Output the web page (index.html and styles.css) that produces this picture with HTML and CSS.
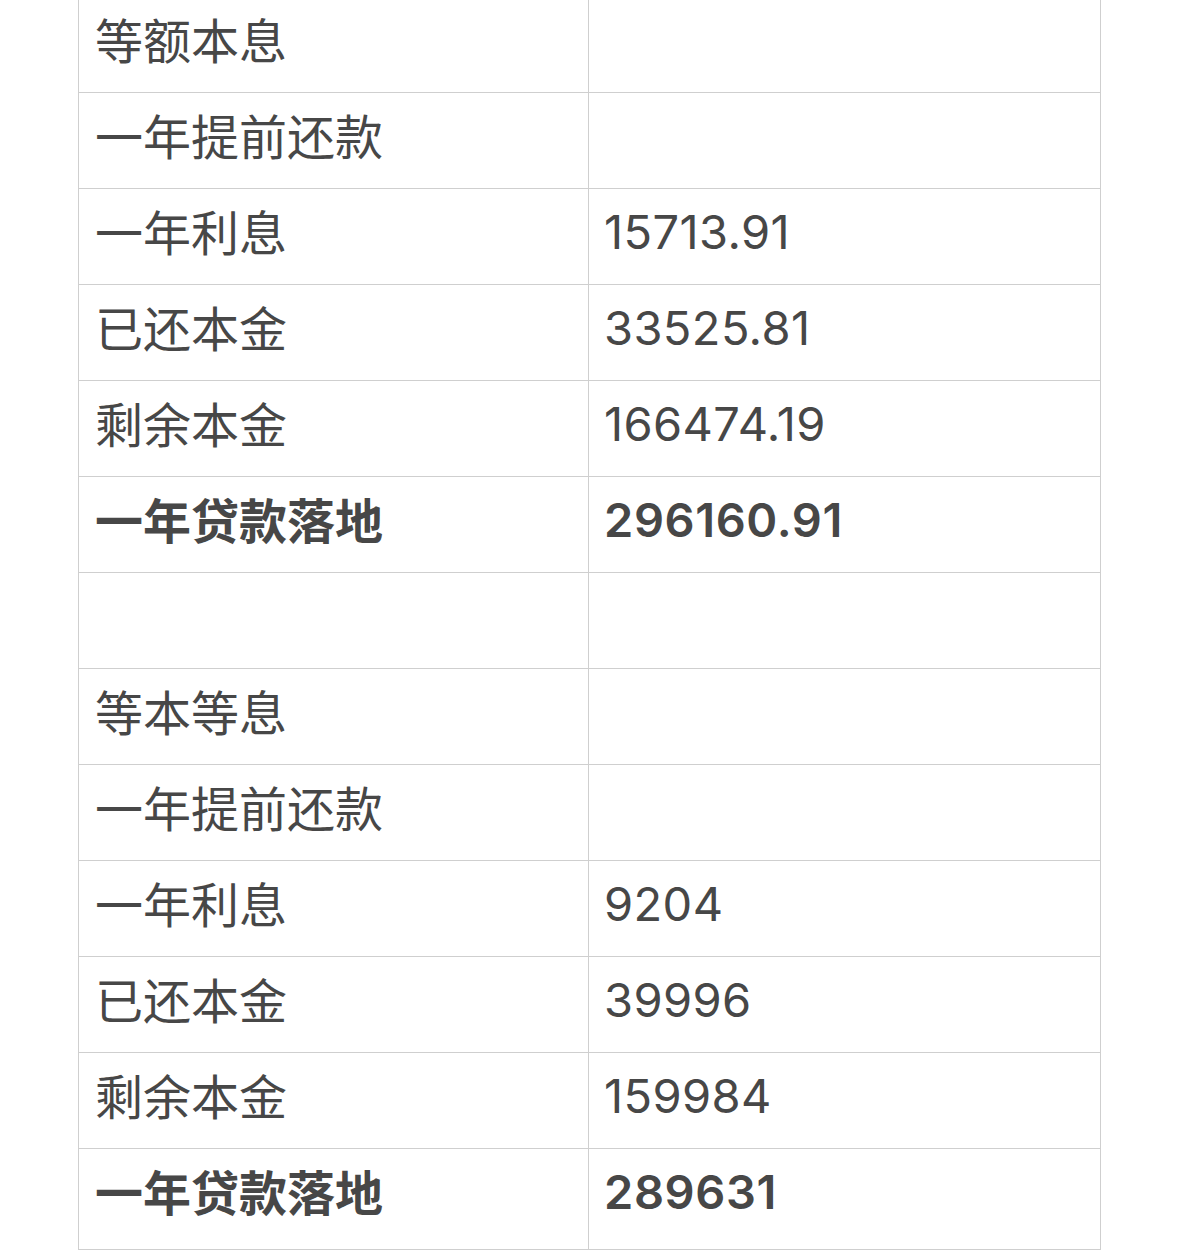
FILE: index.html
```html
<!DOCTYPE html>
<html lang="zh">
<head>
<meta charset="utf-8">
<link rel="stylesheet" href="styles.css">
</head>
<body>
<div class="wrap">
<table class="loan">
<tr><td>等额本息</td><td></td></tr>
<tr><td>一年提前还款</td><td></td></tr>
<tr><td>一年利息</td><td class="num">15713.91</td></tr>
<tr><td>已还本金</td><td class="num">33525.81</td></tr>
<tr><td>剩余本金</td><td class="num">166474.19</td></tr>
<tr class="bold"><td>一年贷款落地</td><td class="num">296160.91</td></tr>
<tr><td></td><td></td></tr>
<tr><td>等本等息</td><td></td></tr>
<tr><td>一年提前还款</td><td></td></tr>
<tr><td>一年利息</td><td class="num">9204</td></tr>
<tr><td>已还本金</td><td class="num">39996</td></tr>
<tr><td>剩余本金</td><td class="num">159984</td></tr>
<tr class="bold last"><td>一年贷款落地</td><td class="num">289631</td></tr>
</table>
</div>
</body>
</html>
```
FILE: styles.css
```css
html, body {
  margin: 0;
  padding: 0;
  background: #fff;
}
.wrap {
  padding-left: 78px;
  margin-top: -4px;
}
.loan {
  border-collapse: collapse;
  font-family: "Noto Sans CJK SC", "Noto Sans", sans-serif;
  font-size: 48px;
  color: #474747;
}
.loan td {
  border: 1px solid #cfcfcf;
  height: 96px;
  padding: 0 0 14px 16px;
  box-sizing: border-box;
  vertical-align: middle;
  line-height: 1;
}
.loan td:first-child {
  width: 510px;
}
.loan td:last-child {
  width: 512px;
}
.loan td.num {
  font-family: Inter, "Noto Sans", sans-serif;
  font-size: 47px;
  letter-spacing: 0.4px;
  padding-left: 15px;
  padding-bottom: 11px;
}
.loan tr.bold td {
  font-weight: 700;
}
.loan tr.bold td.num {
  font-weight: 600;
  letter-spacing: 0.6px;
}
.loan tr.last td {
  height: 101px;
  padding-bottom: 19px;
}
.loan tr.last td.num {
  padding-bottom: 16px;
}
```
